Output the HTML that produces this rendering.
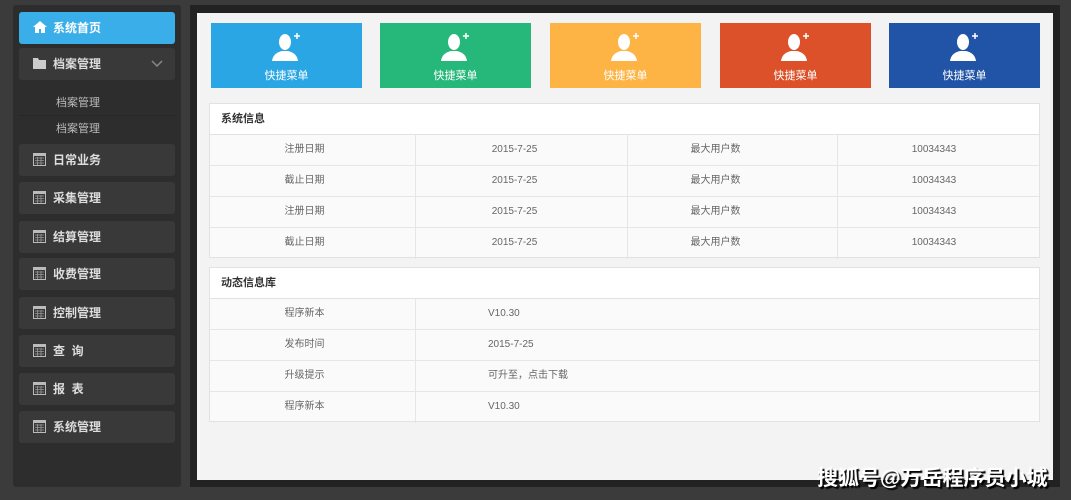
<!DOCTYPE html>
<html><head><meta charset="utf-8"><style>
*{margin:0;padding:0;box-sizing:border-box}
body{width:1071px;height:500px;background:#3b3b3b;font-family:"Liberation Sans","Noto Sans CJK SC",sans-serif;position:relative;overflow:hidden}
.side{position:absolute;left:13px;top:5px;width:168px;height:482px;background:#2d2d2d;border-radius:3px}
.it{position:absolute;left:19px;width:156px;height:32px;background:#393939;border-radius:3px;color:#ddd;font-size:12px;font-weight:bold;line-height:32px;padding-left:34px}
.it svg{position:absolute;left:14px;top:9px}
.home{background:#3aaee8;color:#fff}
.sub{position:absolute;left:56px;color:#bbb;font-size:11px}
.frame{position:absolute;left:190px;top:5px;width:870px;height:482px;background:#222}
.main{position:absolute;left:197px;top:13px;width:856px;height:467px;background:#f3f3f3}
.tile{position:absolute;top:23px;width:151px;height:65px;color:#fff;font-size:11px;text-align:center}
.tile span{position:absolute;left:0;right:0;top:44px}
.tile svg{position:absolute;left:61px;top:10px}
.tb{position:absolute;left:209px;width:831px;background:#fafafa;border:1px solid #e2e2e2}
.hd{height:31px;line-height:31px;padding-left:11px;font-size:11px;font-weight:bold;color:#333;background:#fff;border-bottom:1px solid #e2e2e2}
.r{height:31px;border-bottom:1px solid #e6e6e6;position:relative;font-size:10px;color:#666;line-height:30px}
.r:last-child{border-bottom:none}
.r div{position:absolute;top:0;height:100%;text-align:center}
.r .a{left:0;width:206px;border-right:1px solid #e6e6e6;padding-right:16px}
.r .b{left:206px;width:212px;border-right:1px solid #e6e6e6;padding-right:14px}
.r .c{left:418px;width:210px;border-right:1px solid #e6e6e6;padding-right:34px}
.r .d{left:628px;width:202px;padding-right:10px}
.wm{position:absolute;left:817px;top:462px;color:#fff;font-size:21px;font-weight:bold;text-shadow:2px 2px 1px #000}
</style></head><body>
<div class="side"></div>
<div class="it home" style="top:12px"><svg width="14" height="12" viewBox="0 0 14 12"><path d="M7 0L0 6h2v6h4V8h2v4h4V6h2z" fill="#fff"/></svg>系统首页</div>
<div class="it" style="top:48px"><svg width="14" height="12" viewBox="0 0 14 12"><path d="M0 1h5l1 2h7v9H0z" fill="#ccc"/></svg>档案管理<svg style="left:132px;top:12px" width="12" height="8" viewBox="0 0 12 8"><path d="M1 1l5 5 5-5" stroke="#888" stroke-width="1.5" fill="none"/></svg></div>
<div class="sub" style="top:94px">档案管理</div>
<div style="position:absolute;left:19px;top:115px;width:156px;height:1px;background:#262626"></div>
<div class="sub" style="top:120px">档案管理</div>
<div class="it" style="top:144px"><svg width="13" height="13" viewBox="0 0 13 13"><rect x="0.5" y="0.5" width="12" height="12" fill="none" stroke="#bbb"/><rect x="0" y="0" width="13" height="3" fill="#bbb"/><path d="M2 5h9M2 7.5h9M2 10h9M4.5 4v8M8 4v8" stroke="#999" stroke-width="0.8"/></svg>日常业务</div>
<div class="it" style="top:182px"><svg width="13" height="13" viewBox="0 0 13 13"><rect x="0.5" y="0.5" width="12" height="12" fill="none" stroke="#bbb"/><rect x="0" y="0" width="13" height="3" fill="#bbb"/><path d="M2 5h9M2 7.5h9M2 10h9M4.5 4v8M8 4v8" stroke="#999" stroke-width="0.8"/></svg>采集管理</div>
<div class="it" style="top:221px"><svg width="13" height="13" viewBox="0 0 13 13"><rect x="0.5" y="0.5" width="12" height="12" fill="none" stroke="#bbb"/><rect x="0" y="0" width="13" height="3" fill="#bbb"/><path d="M2 5h9M2 7.5h9M2 10h9M4.5 4v8M8 4v8" stroke="#999" stroke-width="0.8"/></svg>结算管理</div>
<div class="it" style="top:258px"><svg width="13" height="13" viewBox="0 0 13 13"><rect x="0.5" y="0.5" width="12" height="12" fill="none" stroke="#bbb"/><rect x="0" y="0" width="13" height="3" fill="#bbb"/><path d="M2 5h9M2 7.5h9M2 10h9M4.5 4v8M8 4v8" stroke="#999" stroke-width="0.8"/></svg>收费管理</div>
<div class="it" style="top:297px"><svg width="13" height="13" viewBox="0 0 13 13"><rect x="0.5" y="0.5" width="12" height="12" fill="none" stroke="#bbb"/><rect x="0" y="0" width="13" height="3" fill="#bbb"/><path d="M2 5h9M2 7.5h9M2 10h9M4.5 4v8M8 4v8" stroke="#999" stroke-width="0.8"/></svg>控制管理</div>
<div class="it" style="top:335px"><svg width="13" height="13" viewBox="0 0 13 13"><rect x="0.5" y="0.5" width="12" height="12" fill="none" stroke="#bbb"/><rect x="0" y="0" width="13" height="3" fill="#bbb"/><path d="M2 5h9M2 7.5h9M2 10h9M4.5 4v8M8 4v8" stroke="#999" stroke-width="0.8"/></svg>查&nbsp;&nbsp;询</div>
<div class="it" style="top:373px"><svg width="13" height="13" viewBox="0 0 13 13"><rect x="0.5" y="0.5" width="12" height="12" fill="none" stroke="#bbb"/><rect x="0" y="0" width="13" height="3" fill="#bbb"/><path d="M2 5h9M2 7.5h9M2 10h9M4.5 4v8M8 4v8" stroke="#999" stroke-width="0.8"/></svg>报&nbsp;&nbsp;表</div>
<div class="it" style="top:411px"><svg width="13" height="13" viewBox="0 0 13 13"><rect x="0.5" y="0.5" width="12" height="12" fill="none" stroke="#bbb"/><rect x="0" y="0" width="13" height="3" fill="#bbb"/><path d="M2 5h9M2 7.5h9M2 10h9M4.5 4v8M8 4v8" stroke="#999" stroke-width="0.8"/></svg>系统管理</div>

<div class="frame"></div>
<div class="main"></div>
<div class="tile" style="left:211px;background:#29a6e3"><svg width="30" height="28" viewBox="0 0 30 28"><ellipse cx="13" cy="9" rx="6" ry="8" fill="#fff"/><path d="M0 28c1-7 6-9 10-10h6c4 1 9 3 10 10z" fill="#fff"/><path d="M22 3h6M25 0v6" stroke="#fff" stroke-width="1.5"/></svg><span>快捷菜单</span></div>
<div class="tile" style="left:380px;background:#26b77a"><svg width="30" height="28" viewBox="0 0 30 28"><ellipse cx="13" cy="9" rx="6" ry="8" fill="#fff"/><path d="M0 28c1-7 6-9 10-10h6c4 1 9 3 10 10z" fill="#fff"/><path d="M22 3h6M25 0v6" stroke="#fff" stroke-width="1.5"/></svg><span>快捷菜单</span></div>
<div class="tile" style="left:550px;background:#fdb445"><svg width="30" height="28" viewBox="0 0 30 28"><ellipse cx="13" cy="9" rx="6" ry="8" fill="#fff"/><path d="M0 28c1-7 6-9 10-10h6c4 1 9 3 10 10z" fill="#fff"/><path d="M22 3h6M25 0v6" stroke="#fff" stroke-width="1.5"/></svg><span>快捷菜单</span></div>
<div class="tile" style="left:720px;background:#dc5129"><svg width="30" height="28" viewBox="0 0 30 28"><ellipse cx="13" cy="9" rx="6" ry="8" fill="#fff"/><path d="M0 28c1-7 6-9 10-10h6c4 1 9 3 10 10z" fill="#fff"/><path d="M22 3h6M25 0v6" stroke="#fff" stroke-width="1.5"/></svg><span>快捷菜单</span></div>
<div class="tile" style="left:889px;background:#2153a6"><svg width="30" height="28" viewBox="0 0 30 28"><ellipse cx="13" cy="9" rx="6" ry="8" fill="#fff"/><path d="M0 28c1-7 6-9 10-10h6c4 1 9 3 10 10z" fill="#fff"/><path d="M22 3h6M25 0v6" stroke="#fff" stroke-width="1.5"/></svg><span>快捷菜单</span></div>

<div class="tb" style="top:103px;height:155px">
<div class="hd">系统信息</div>
<div class="r"><div class="a">注册日期</div><div class="b">2015-7-25</div><div class="c">最大用户数</div><div class="d">10034343</div></div>
<div class="r"><div class="a">截止日期</div><div class="b">2015-7-25</div><div class="c">最大用户数</div><div class="d">10034343</div></div>
<div class="r"><div class="a">注册日期</div><div class="b">2015-7-25</div><div class="c">最大用户数</div><div class="d">10034343</div></div>
<div class="r"><div class="a">截止日期</div><div class="b">2015-7-25</div><div class="c">最大用户数</div><div class="d">10034343</div></div>
</div>

<div class="tb" style="top:267px;height:155px">
<div class="hd">动态信息库</div>
<div class="r"><div class="a">程序新本</div><div style="left:278px;text-align:left">V10.30</div></div>
<div class="r"><div class="a">发布时间</div><div style="left:278px;text-align:left">2015-7-25</div></div>
<div class="r"><div class="a">升级提示</div><div style="left:278px;text-align:left">可升至，点击下载</div></div>
<div class="r"><div class="a">程序新本</div><div style="left:278px;text-align:left">V10.30</div></div>
</div>
<div class="wm">搜狐号@万岳程序员小城</div>
</body></html>
